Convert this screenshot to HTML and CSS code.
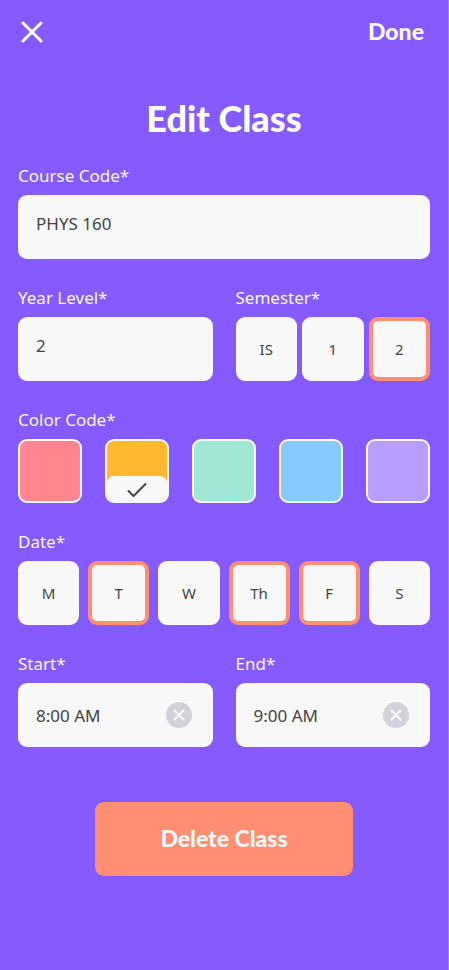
FILE: index.html
```html
<!DOCTYPE html>
<html lang="en">
<head>
<meta charset="utf-8">
<meta name="viewport" content="width=device-width, initial-scale=1">
<title>Edit Class</title>
<link rel="stylesheet" href="styles.css">
</head>
<body>
<form class="screen">
  <header class="topbar">
    <button class="close" type="button" aria-label="Close">
      <svg width="22" height="22" viewBox="0 0 22 22"><path d="M2 2L20 20M20 2L2 20" fill="none" stroke="currentColor" stroke-width="3" stroke-linecap="round"/></svg>
    </button>
    <button class="done" type="submit">Done</button>
  </header>
  <h1>Edit Class</h1>
  <main class="fields">
    <div class="field">
      <label class="label" for="code">Course Code*</label>
      <input class="box raised" id="code" type="text" value="PHYS 160">
    </div>
    <div class="pair">
      <div class="field">
        <label class="label" for="year">Year Level*</label>
        <input class="box raised" id="year" type="text" value="2">
      </div>
      <fieldset class="field">
        <legend class="label">Semester*</legend>
        <div class="semesters">
          <label class="chip"><input type="radio" name="semester"><span>IS</span></label>
          <label class="chip"><input type="radio" name="semester"><span>1</span></label>
          <label class="chip"><input type="radio" name="semester" checked><span>2</span></label>
        </div>
      </fieldset>
    </div>
    <fieldset class="field">
      <legend class="label">Color Code*</legend>
      <div class="colors">
        <label class="swatch red"><input type="radio" name="color" aria-label="Red"></label>
        <label class="swatch yellow"><input type="radio" name="color" aria-label="Yellow" checked>
          <span class="tick"><svg width="20" height="16" viewBox="0 0 20 16"><path d="M1.5 9L6.5 14L18.5 2" fill="none" stroke="currentColor" stroke-width="2" stroke-linecap="round" stroke-linejoin="round"/></svg></span>
        </label>
        <label class="swatch green"><input type="radio" name="color" aria-label="Green"></label>
        <label class="swatch blue"><input type="radio" name="color" aria-label="Blue"></label>
        <label class="swatch violet"><input type="radio" name="color" aria-label="Violet"></label>
      </div>
    </fieldset>
    <fieldset class="field">
      <legend class="label">Date*</legend>
      <div class="days">
        <label class="chip"><input type="checkbox"><span>M</span></label>
        <label class="chip"><input type="checkbox" checked><span>T</span></label>
        <label class="chip"><input type="checkbox"><span>W</span></label>
        <label class="chip"><input type="checkbox" checked><span>Th</span></label>
        <label class="chip"><input type="checkbox" checked><span>F</span></label>
        <label class="chip"><input type="checkbox"><span>S</span></label>
      </div>
    </fieldset>
    <div class="pair">
      <div class="field">
        <label class="label" for="start">Start*</label>
        <div class="box time">
          <input id="start" type="text" value="8:00 AM">
          <button class="clear" type="button" aria-label="Clear start">
            <svg width="26" height="26" viewBox="0 0 26 26"><circle cx="13" cy="13" r="13" fill="#d2d1d9"/><path d="M8.5 8.5L17.5 17.5M17.5 8.5L8.5 17.5" fill="none" stroke="#f8f8f8" stroke-width="2" stroke-linecap="round"/></svg>
          </button>
        </div>
      </div>
      <div class="field">
        <label class="label" for="end">End*</label>
        <div class="box time">
          <input id="end" type="text" value="9:00 AM">
          <button class="clear" type="button" aria-label="Clear end">
            <svg width="26" height="26" viewBox="0 0 26 26"><circle cx="13" cy="13" r="13" fill="#d2d1d9"/><path d="M8.5 8.5L17.5 17.5M17.5 8.5L8.5 17.5" fill="none" stroke="#f8f8f8" stroke-width="2" stroke-linecap="round"/></svg>
          </button>
        </div>
      </div>
    </div>
  </main>
  <button class="delete" type="button">Delete Class</button>
</form>
</body>
</html>
```
FILE: styles.css
```css
* {
  box-sizing: border-box;
}

body {
  margin: 0;
  min-height: 100vh;
  border-right: 1px solid #a07fff;
  background: #855aff;
  color: #f8f8f8;
  font-family: "Noto Sans", "Open Sans", sans-serif;
  font-size: 17px;
}

button,
input {
  margin: 0;
  padding: 0;
  border: 0;
  background: none;
  color: inherit;
  font: inherit;
}

button {
  cursor: pointer;
}

svg {
  display: block;
}

.screen {
  display: flex;
  flex-direction: column;
  padding: 16px 18px 24px;
}

.topbar {
  display: flex;
  justify-content: space-between;
  align-items: center;
  height: 32px;
  padding: 0 6px 0 3px;
}

.close {
  color: #fff;
}

.done,
.delete {
  padding-bottom: 2px;
  font-family: Lato, sans-serif;
  font-size: 23px;
  font-weight: 900;
  line-height: 32px;
}

h1 {
  margin: 44px 0 20px;
  color: #fff;
  font-family: Lato, sans-serif;
  font-size: 36px;
  font-weight: 900;
  line-height: 52px;
  text-align: center;
}

.fields {
  display: flex;
  flex-direction: column;
  gap: 27px;
}

.field {
  display: flex;
  flex-direction: column;
  min-width: 0;
  margin: 0;
  padding: 0;
  border: 0;
}

.label {
  display: block;
  margin-bottom: 7px;
  padding: 0;
  line-height: 24px;
}

.pair {
  display: grid;
  grid-template-columns: 1fr 1fr;
  gap: 23px;
}

.box {
  width: 100%;
  height: 64px;
  padding: 0 18px;
  border-radius: 9px;
  background: #f8f8f8;
  color: #444;
}

.raised {
  padding-bottom: 8px;
}

.time {
  display: flex;
  align-items: center;
  gap: 8px;
  padding-right: 21px;
}

.time input {
  flex: 1;
  min-width: 0;
}

.semesters,
.days {
  display: grid;
  grid-template-columns: repeat(3, 1fr);
  gap: 5px;
}

.days {
  grid-template-columns: repeat(6, 1fr);
  gap: 9px;
}

.colors {
  display: grid;
  grid-template-columns: repeat(5, 1fr);
  gap: 23px;
}

.chip,
.swatch {
  position: relative;
  display: flex;
  align-items: center;
  justify-content: center;
  height: 64px;
  border-radius: 9px;
  color: #444;
  font-size: 15px;
  cursor: pointer;
}

.chip input,
.swatch input {
  position: absolute;
  inset: 0;
  appearance: none;
  border-radius: 9px;
}

.chip {
  background: #f8f8f8;
}

.chip:has(:checked) {
  background: #ff8e73;
}

.chip input:checked {
  inset: 4px;
  border-radius: 5px;
  background: #f8f8f8;
}

.chip span {
  position: relative;
}

.swatch {
  align-items: flex-end;
  overflow: hidden;
  border: 2px solid #f8f8f8;
}

.red { background: #ff858f; }
.yellow { background: #ffb931; }
.green { background: #a0e8d5; }
.blue { background: #87caff; }
.violet { background: #b99dff; }

.tick {
  display: flex;
  align-items: center;
  justify-content: center;
  width: 100%;
  height: 25px;
  padding-top: 2px;
  border-radius: 7px 7px 0 0;
  background: #f8f8f8;
}

.delete {
  align-self: center;
  width: 62.5%;
  height: 74px;
  margin-top: 55px;
  border-radius: 9px;
  background: #ff8e73;
}
```
